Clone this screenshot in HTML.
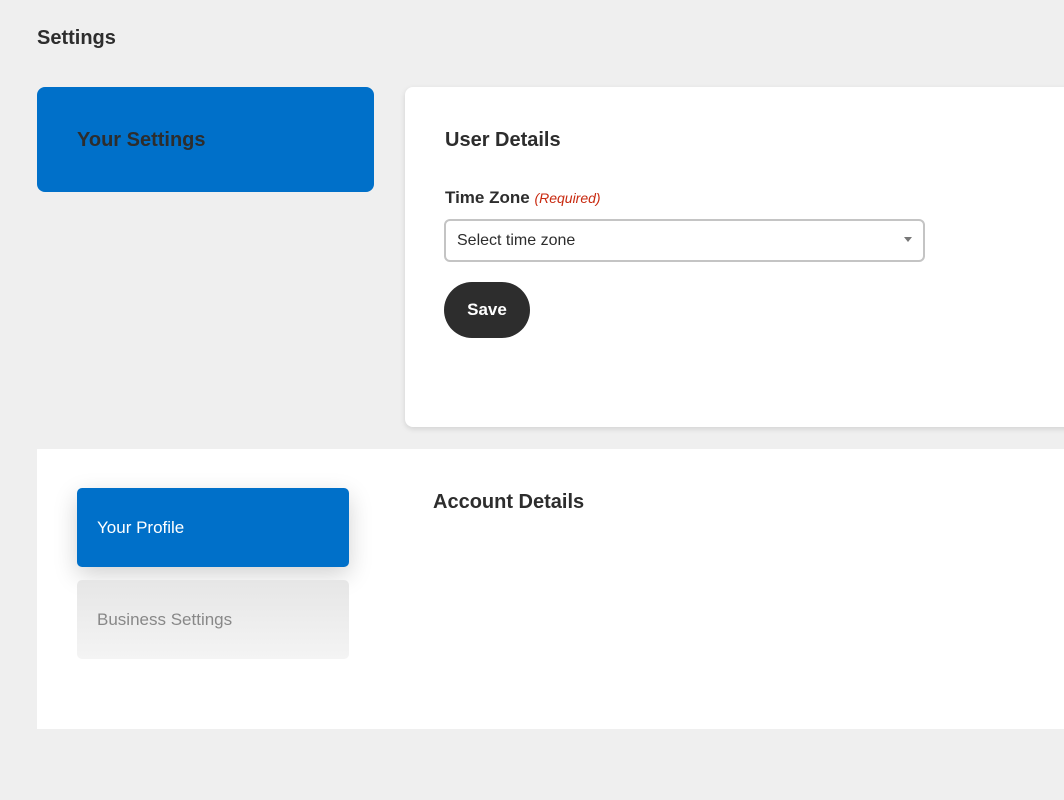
<!DOCTYPE html>
<html><head><style>
*{box-sizing:border-box;margin:0;padding:0}
body{width:1064px;height:800px;background:#efefef;font-family:"Liberation Sans",sans-serif;color:#2d2d2d;position:relative;overflow:hidden}
.abs{position:absolute}
h1{position:absolute;left:37px;top:27px;font-size:20px;font-weight:bold}
.ys{left:37px;top:87px;width:337px;height:105px;background:#0070c9;border-radius:8px;}
.ys span{position:absolute;left:40px;top:42px;font-size:20px;font-weight:bold;color:#2d2d2d}
.card{left:405px;top:87px;width:680px;height:340px;background:#fff;border-radius:8px;box-shadow:0 2px 6px rgba(0,0,0,.12)}
.lower{left:37px;top:449px;width:1040px;height:280px;background:#fff}
</style></head><body>
<h1>Settings</h1>
<div class="abs ys"><span>Your Settings</span></div>
<div class="abs card">
 <div class="abs" style="left:40px;top:42px;font-size:20px;font-weight:bold">User Details</div>
 <div class="abs" style="left:40px;top:101px;font-size:17px;font-weight:bold">Time Zone <i style="color:#c8290f;font-weight:normal;font-size:14px">(Required)</i></div>
 <div class="abs" style="left:39px;top:132px;width:481px;height:43px;border:2px solid #c4c4c4;border-radius:6px;font-size:16px;padding:11px 11px">Select time zone
  <div class="abs" style="right:11px;top:16px;width:0;height:0;border-left:4px solid transparent;border-right:4px solid transparent;border-top:5px solid #777"></div></div>
 <div class="abs" style="left:39px;top:195px;width:86px;height:56px;background:#2d2d2d;border-radius:28px;color:#fff;font-weight:bold;font-size:17px;text-align:center;line-height:56px">Save</div>
</div>
<div class="abs lower">
 <div class="abs" style="left:40px;top:39px;width:272px;height:79px;background:#0070c9;border-radius:5px;box-shadow:0 8px 24px rgba(0,0,0,.18);color:#fff;font-size:17px;padding:30px 20px">Your Profile</div>
 <div class="abs" style="left:40px;top:131px;width:272px;height:79px;background:linear-gradient(#e6e6e6,#f4f4f4);border-radius:5px;color:#888;font-size:17px;padding:30px 20px">Business Settings</div>
 <div class="abs" style="left:396px;top:42px;font-size:20px;font-weight:bold">Account Details</div>
</div>
</body></html>
